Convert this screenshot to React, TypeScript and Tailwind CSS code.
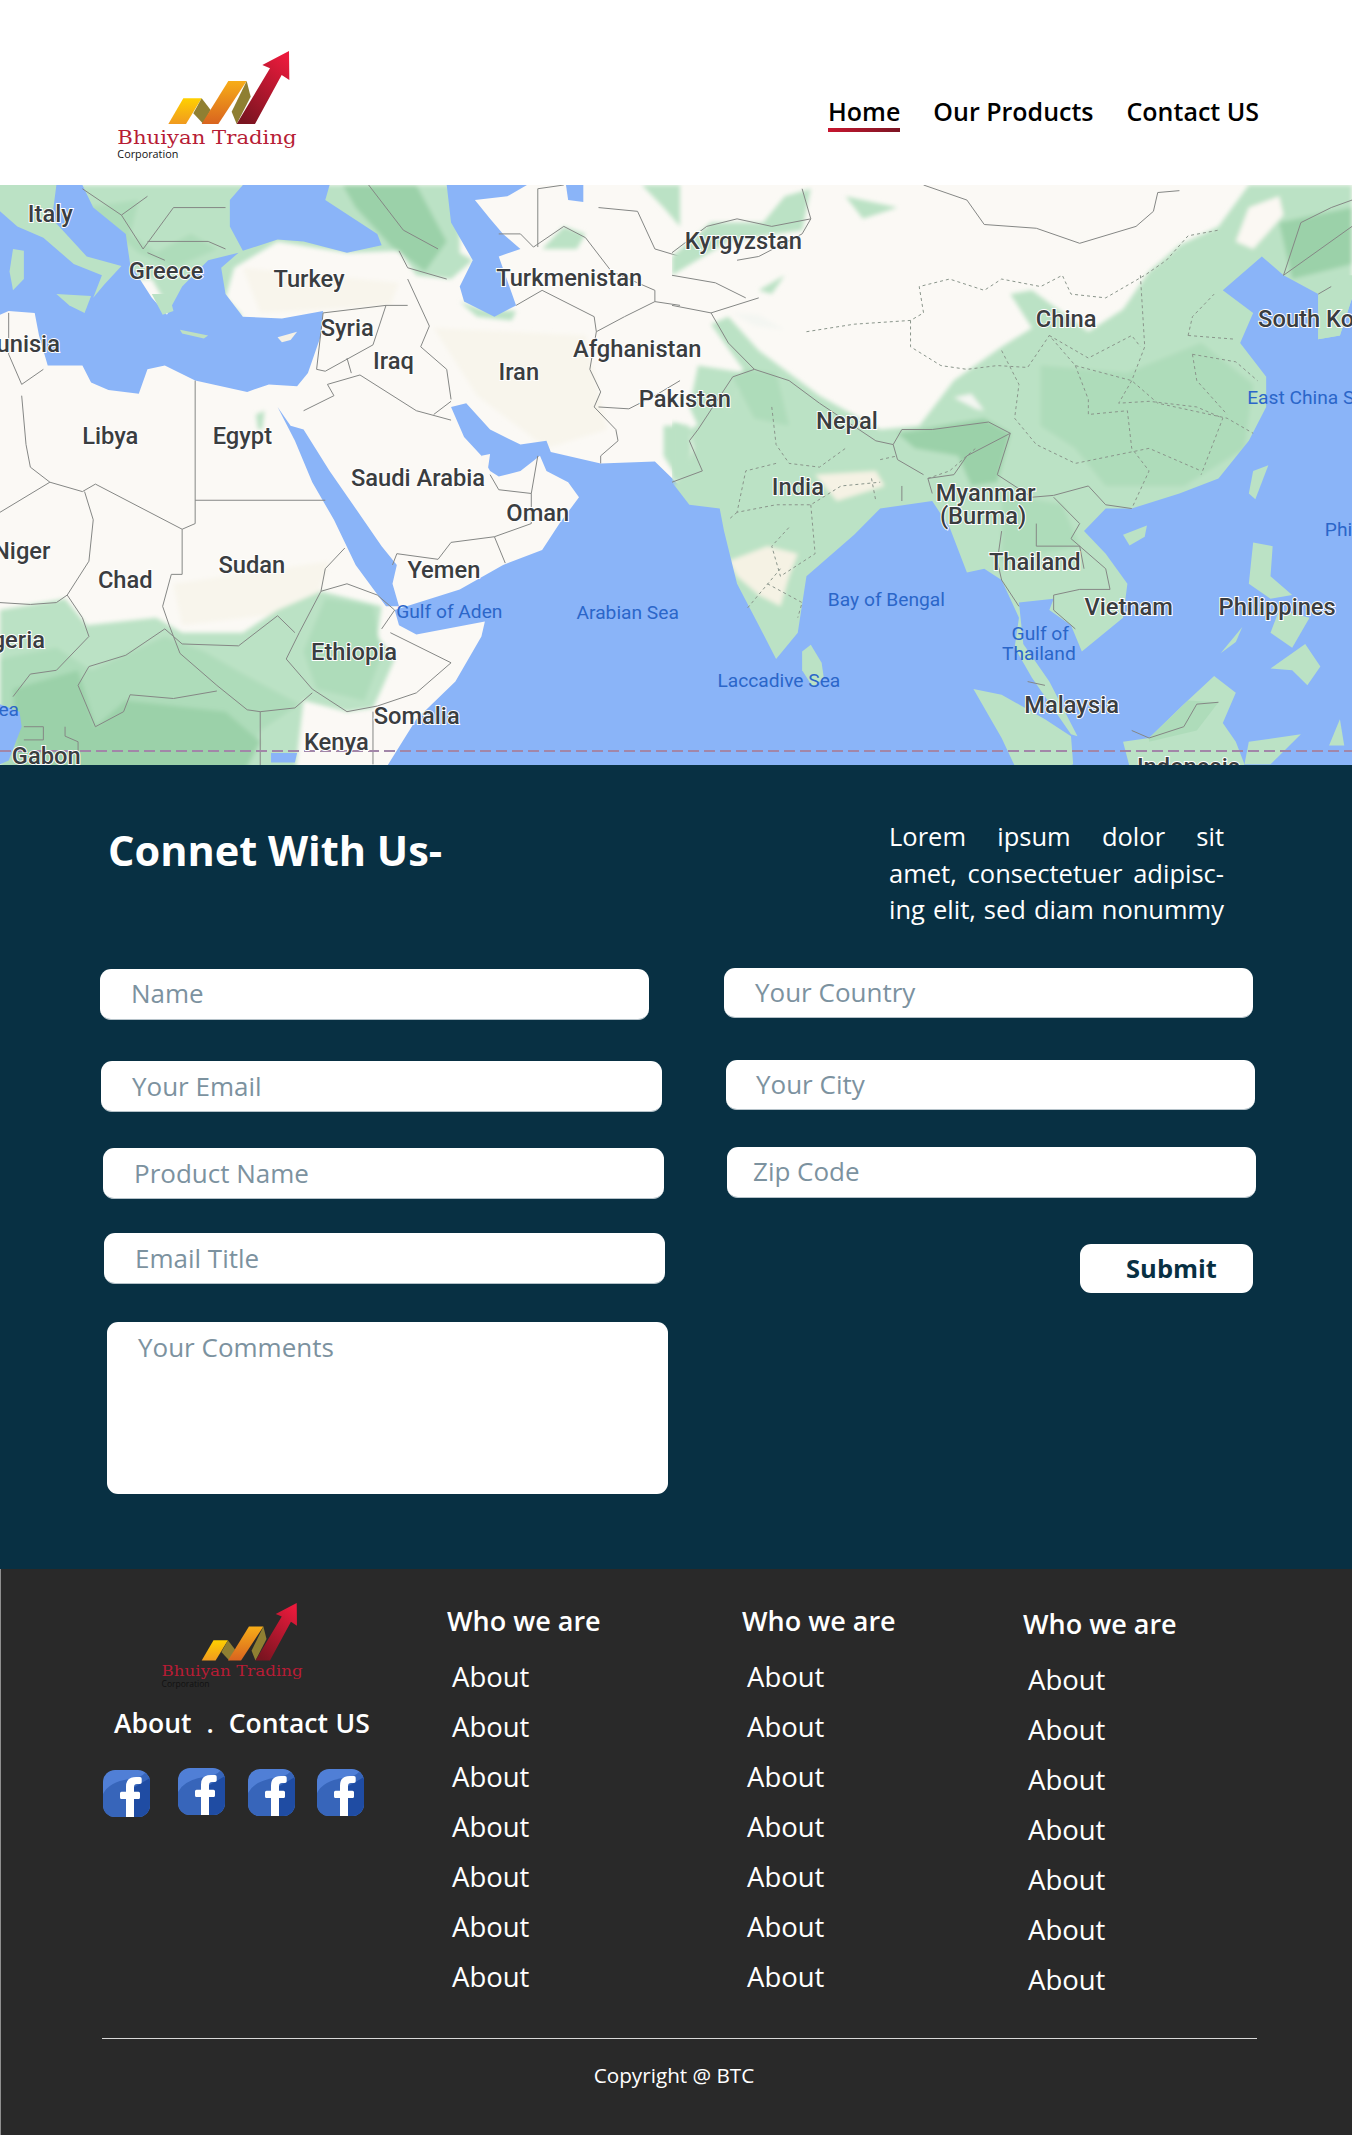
const SCALE_L = 'scale(0.4337,0.3762)';
const SCALE_R = 'translate(672,0) scale(0.4337,0.3762)';

const GREEN = '#bbe2c5';
const GREEN_MID = '#aedcba';
const GREEN_DARK = '#9bd1a9';
const WATER = '#8ab4f8';
const LINE = '#858785';

const leftGreens: [string, string][] = [
  ['#f8f5ec', 'M1000,380 L1350,400 L1400,650 L1260,700 L1100,560 Z'],
  ['#f8f5ec', 'M560,220 L920,260 L900,320 L600,340 Z'],
  ['#f8f5ec', 'M400,1060 L760,1000 L720,1130 L420,1170 Z'],
  [GREEN, 'M0,0 H1060 L1060,180 L1090,200 L1040,250 L960,240 L920,175 L800,180 L640,150 L540,220 L520,300 L560,350 L400,350 L350,250 L200,250 L0,200 Z'],
  [GREEN_MID, 'M200,60 L320,40 L300,130 L360,180 L440,130 L500,170 L400,220 L320,180 Z'],
  [GREEN_DARK, 'M790,0 H960 L1030,150 L980,230 L900,160 L820,60 Z'],
  [GREEN, 'M1060,310 L1110,330 L1190,335 L1180,360 L1100,350 Z'],
  [GREEN, 'M1480,0 H1568 V110 L1530,60 Z'],
  [GREEN, 'M1250,170 L1300,110 L1350,130 L1330,170 Z'],
  [GREEN, 'M1530,640 H1568 V790 L1530,720 Z'],
  [GREEN, 'M0,1130 L150,1100 L200,1170 L360,1150 L420,1190 L560,1190 L640,1130 L740,1080 L880,1120 L870,1200 L910,1260 L880,1340 L860,1390 L800,1400 L700,1370 L680,1568 H0 Z'],
  [GREEN_MID, 'M0,1260 L130,1230 L210,1290 L380,1200 L470,1240 L560,1300 L690,1380 L600,1450 L560,1568 H0 Z'],
  [GREEN_DARK, 'M30,1340 L180,1290 L220,1440 L290,1370 L520,1400 L600,1480 L560,1568 H40 Z'],
  [GREEN_MID, 'M700,1240 L750,1100 L860,1120 L880,1250 L840,1370 L730,1340 Z'],
  [GREEN, 'M590,610 L610,600 L605,650 L595,650 Z'],
];

const leftWater = [
  'M0,70 L40,0 L130,0 L190,0 L215,60 L290,130 L300,210 L350,300 L385,345 L420,270 L480,200 L550,180 L510,220 L520,290 L560,350 L650,355 L745,335 L740,400 L725,450 L710,500 L685,535 L620,530 L570,550 L450,520 L380,480 L340,490 L320,555 L250,545 L210,525 L190,480 L110,480 L90,400 L80,340 L20,335 L0,345 Z',
  'M530,110 L530,40 L560,0 L760,0 L750,40 L870,130 L880,160 L800,180 L700,150 L640,145 L560,175 Z',
  'M1030,0 H1215 L1170,30 L1095,40 L1130,90 L1160,130 L1200,170 L1150,190 L1190,320 L1140,350 L1070,310 L1060,270 L1090,200 L1040,100 Z',
  'M1305,0 H1345 V45 L1310,40 Z',
  'M1040,590 L1075,580 L1130,650 L1200,690 L1260,680 L1270,710 L1385,740 L1510,735 L1568,800 V1568 H880 L960,1420 L1050,1320 L1110,1200 L1118,1160 L960,1195 L920,1170 L910,1130 L1060,1075 L1160,1010 L1250,970 L1290,900 L1335,830 L1310,790 L1260,760 L1245,720 L1200,760 L1150,775 L1130,760 L1110,720 L1070,670 Z',
  'M640,590 L670,640 L700,650 L760,760 L820,860 L880,960 L915,1010 L905,1060 L920,1120 L890,1120 L820,1010 L770,890 L720,790 L680,680 Z',
  'M0,1380 L45,1400 L50,1440 L20,1530 L0,1540 Z',
  'M625,1510 H685 L680,1535 H625 Z',
];

const leftIslands: [string, string][] = [
  [GREEN, 'M0,0 L130,0 L120,90 L200,190 L280,215 L240,265 L215,300 L235,240 L170,210 L100,140 L40,110 L0,70 Z'],
  [GREEN, 'M30,170 L55,175 L55,250 L30,280 L22,230 Z'],
  [GREEN, 'M130,290 L210,295 L195,340 L160,320 Z'],
  [GREEN, 'M350,290 L390,290 L400,335 L375,345 Z'],
  ['#bfe0c0', 'M415,385 L480,400 L470,408 L420,395 Z'],
  ['#f5f1e6', 'M640,405 L685,390 L670,412 L650,418 Z'],
  ['#fbf8f3', 'M1110,720 L1130,715 L1125,755 L1110,745 Z'],
];

const leftBorders = [
  'M450,520 V900 L420,915 V1035 L395,1035 L375,1120 L390,1170 L415,1245 L500,1330 L570,1395 L600,1400 L600,1568',
  'M450,838 H750',
  'M420,915 L220,795 L190,815 L115,790 L0,870',
  'M50,560 L60,690 L70,750 L115,790',
  'M20,340 L20,450 L50,530 L100,490',
  'M195,815 L215,890 L205,1000 L155,1090',
  'M0,1110 L70,1115 L130,1110 L155,1090 L190,1150 L205,1200 L130,1290 L70,1300 L30,1360',
  'M205,1280 L290,1250 L380,1180 L420,1220 L550,1225 L640,1145 L680,1190',
  'M205,1280 L180,1330 L220,1440 L285,1400 L300,1355 L400,1365 L500,1345',
  'M795,965 L750,1020 L740,1080 L690,1190 L660,1260 L720,1340 L800,1400 L870,1385 L960,1350 L1040,1270 L900,1190',
  'M740,1080 L800,1060 L870,1090 L910,1130 L880,1180',
  'M860,1400 V1540',
  'M720,1350 L680,1390 L600,1400',
  'M55,1440 H100 V1475 H55 M150,1440 V1465 L180,1480 V1540',
  'M700,600 L770,560 L755,530 L830,505 L960,600 L1040,625',
  'M1000,610 L1040,575',
  'M745,340 L740,390 L730,490 L750,495 L860,425 L890,320 L940,320',
  'M940,250 L990,375 L970,430 L1030,490 L1040,570',
  'M800,460 L810,500',
  'M915,980 L1010,995 L1040,950 L1140,935 L1225,900 L1225,820 L1150,810 L1130,770',
  'M915,980 L905,1010',
  'M1140,935 L1165,1005',
  'M1225,820 L1240,720',
  'M745,340 L890,320',
  'M1190,320 L1250,280 L1370,350 L1375,390 L1360,490 L1385,550 L1370,590 L1420,650 L1425,680 L1385,720 L1385,740',
  'M1380,590 L1450,595 L1510,560 L1568,520',
  'M1240,10 V165',
  'M1240,10 L1300,0 M1380,60 L1470,70 L1510,170 L1568,190',
  'M1150,130 L1200,130 L1230,165 L1300,110 L1350,140 L1410,230 L1510,280 L1510,310 L1568,320',
  'M1375,390 L1440,350 L1510,310',
  'M190,10 L280,80 L330,170 L400,60 L520,60 M340,150 L480,150 L520,170 M280,80 L340,30 M340,180 L380,200 M850,0 L930,120 L1010,170 M920,175 L940,220 L1030,250',
];

const rightGreens: [string, string][] = [
  [GREEN, 'M0,800 L30,760 L50,700 L40,650 L120,600 L130,600 L170,500 L90,370 L130,350 L200,440 L340,560 L480,650 L570,640 L650,520 L760,430 L830,380 L780,290 L830,280 L960,390 L1040,330 L1100,230 L1170,160 L1260,110 L1330,0 H1568 V1568 H0 Z'],
  [GREEN, 'M0,630 L40,640 L45,700 L35,760 L0,790 Z'],
  [GREEN, 'M60,480 L170,500 L130,600 L60,640 L40,590 Z'],
  [GREEN_MID, 'M850,480 L1050,500 L1220,420 L1340,530 L1320,700 L1180,800 L1000,800 L930,700 L850,640 Z'],
  [GREEN_DARK, 'M1400,100 L1568,60 V210 L1430,250 Z'],
  [GREEN_DARK, 'M520,660 L720,620 L780,660 L750,790 L690,800 L660,720 L560,700 Z'],
  [GREEN_MID, 'M760,820 L900,850 L940,960 L760,1000 Z'],
  [GREEN_MID, 'M170,490 L240,500 L270,640 L190,620 L140,510 Z'],
  ['#fbf8f3', 'M1300,150 L1330,60 L1400,30 L1410,80 L1340,170 Z'],
  ['#f5f2e4', 'M130,1000 L220,960 L290,980 L270,1040 L250,1120 L200,1090 L150,1040 Z'],
  ['#f5f2e4', 'M330,770 L470,760 L490,800 L380,840 Z'],
  [GREEN, 'M260,30 L320,10 L300,120 L130,150 L0,240 L0,190 L90,100 L210,100 Z'],
  [GREEN, 'M400,30 L520,60 L440,90 Z'],
  [GREEN, 'M200,280 L260,240 L230,290 Z'],
];

const rightWater =
  'M0,790 L40,850 L110,860 L120,920 L150,1060 L200,1170 L240,1260 L290,1190 L310,1040 L420,930 L480,860 L600,840 L640,910 L680,1030 L720,1020 L760,1050 L800,1150 L790,1230 L830,1310 L920,1460 L935,1465 L870,1320 L810,1220 L800,1110 L880,1100 L870,1130 L920,1170 L945,1240 L1040,1150 L1050,1060 L1000,980 L950,920 L1000,860 L1060,860 L1170,820 L1260,780 L1330,680 L1370,590 L1370,510 L1310,420 L1340,340 L1270,280 L1360,190 L1410,240 L1490,290 L1490,410 L1540,400 L1568,300 V1568 H0 Z';

const rightIslands: [string, string][] = [
  [GREEN, 'M300,1240 L320,1222 L345,1270 L350,1310 L325,1335 L300,1290 Z'],
  [GREEN, 'M695,1340 L760,1355 L860,1420 L920,1465 L925,1540 L860,1568 H800 L760,1470 Z'],
  [GREEN, 'M1040,1480 L1100,1470 L1180,1380 L1250,1305 L1300,1350 L1270,1430 L1300,1480 L1320,1540 L1300,1568 H1060 Z'],
  [GREEN_MID, 'M1100,1470 L1190,1370 L1260,1375 L1210,1450 L1100,1480 Z'],
  [GREEN, 'M1340,950 L1385,960 L1380,1040 L1430,1090 L1380,1100 L1330,1060 Z'],
  [GREEN, 'M1330,820 L1340,760 L1375,745 L1345,835 Z'],
  [GREEN, 'M1040,930 L1095,905 L1090,935 L1055,958 Z'],
  [GREEN, 'M1380,1285 L1460,1220 L1495,1280 L1465,1330 L1430,1290 Z'],
  [GREEN, 'M1265,1245 L1315,1175 L1300,1215 Z'],
  [GREEN, 'M1400,1130 L1470,1150 L1430,1230 L1380,1190 Z'],
  [GREEN, 'M1330,1480 L1450,1460 L1380,1540 L1320,1540 Z'],
  [GREEN, 'M1490,290 L1540,240 L1568,240 V300 L1540,400 L1490,410 Z'],
  [GREEN, 'M1515,1490 L1540,1420 L1550,1490 Z'],
];

const rightBorders = [
  'M580,0 L680,40 L720,105 L840,115 L940,155 L1070,110 L1110,70 L1120,20 L1170,15',
  'M300,10 L320,90 L300,130 L200,190 L150,200',
  'M0,180 L80,110 L150,90 L230,110 L320,90',
  'M90,340 L130,420 L190,490 L140,510 L60,650 L40,680 L70,760 L0,790',
  'M190,490 L270,520 L340,580 L470,680 L510,690 L530,650 L600,650 L730,630 L780,660',
  'M780,660 L680,720 L650,770 L590,780 L600,820',
  'M510,690 L520,730 L580,770 M530,800 L530,840',
  'M780,660 L750,770 L830,830 L880,825 L960,800 L1000,850 L1060,860',
  'M880,830 L940,900 L920,940 L1000,1020 L1010,1075 L940,1075 L880,1090 L880,1130 L930,1180',
  'M840,900 L840,960 L940,960 L950,1020',
  'M760,920 L750,1000 L760,1050 L800,1120',
  'M820,1320 L860,1330',
  'M1060,1450 L1100,1470 L1180,1440 L1210,1380 L1260,1375',
  'M1490,290 L1520,270',
  'M1410,240 L1568,110',
  'M0,320 L90,340 L200,300 M0,240 L100,260 L170,300',
  'M1410,240 L1450,100 L1520,60 L1568,40',
];

const rightDashed = [
  'M310,390 L420,370 L550,360 L580,340 L570,270 L640,250 L720,280 L760,250 L850,270 L900,240 L920,290 L1000,300 L1090,240 L1140,200 L1190,135 L1260,120',
  'M550,360 L550,430 L620,480 L680,490 L750,480 L820,485 L870,400 L930,480 L1060,520 L1120,580 L1200,600 L1280,620 L1340,660',
  'M760,440 L800,530 L790,620 L840,690 L930,740 L1100,700 L1220,760',
  'M930,480 L960,570 L960,610 L1050,600 L1060,700 L1100,760 L1060,860',
  'M1080,240 L1090,430 L1060,520 L1030,580 L1100,575 L1210,590 L1270,620 L1220,770',
  'M1190,400 L1200,350 L1250,290 M1190,400 L1300,410 M1200,450 L1300,470 L1350,520 M1200,450 L1210,520 L1280,610',
  'M870,400 L960,460 L1060,400 L1080,430',
  'M230,590 L240,690 L270,740 L340,750 L400,700 M240,740 L170,760 L150,870 L240,850 L320,850 L390,800 L480,790 M320,850 L330,980 L250,1040 L230,960 L270,910 M150,870 L130,890 M220,1060 L300,1110 L290,1150 M460,780 L470,840 M250,1020 L170,1130',
  'M480,730 L520,720 M590,780 L640,760 L700,700',
];

const labels: { t: string; x: number; y: number; a?: 'start' | 'end'; blue?: boolean }[] = [
  { t: 'Italy', x: 37, y: 157 },
  { t: 'Greece', x: 122, y: 199 },
  { t: 'Turkey', x: 227, y: 205 },
  { t: 'Syria', x: 255, y: 241 },
  { t: 'Iraq', x: 289, y: 265 },
  { t: 'Iran', x: 381, y: 273 },
  { t: 'Turkmenistan', x: 418, y: 204 },
  { t: 'Kyrgyzstan', x: 546, y: 177 },
  { t: 'Afghanistan', x: 468, y: 256 },
  { t: 'Pakistan', x: 503, y: 293 },
  { t: 'Nepal', x: 622, y: 309 },
  { t: 'China', x: 783, y: 234 },
  { t: 'South Korea', x: 924, y: 234, a: 'start' },
  { t: 'East China Sea', x: 916, y: 292, a: 'start', blue: true },
  { t: 'Philippine Sea', x: 973, y: 389, a: 'start', blue: true },
  { t: 'Tunisia', x: 44, y: 253, a: 'end' },
  { t: 'Libya', x: 81, y: 320 },
  { t: 'Egypt', x: 178, y: 320 },
  { t: 'Saudi Arabia', x: 307, y: 351 },
  { t: 'Oman', x: 395, y: 377 },
  { t: 'Niger', x: 37, y: 405, a: 'end' },
  { t: 'Chad', x: 92, y: 426 },
  { t: 'Sudan', x: 185, y: 415 },
  { t: 'Yemen', x: 326, y: 419 },
  { t: 'Gulf of Aden', x: 330, y: 449, blue: true },
  { t: 'Arabian Sea', x: 461, y: 450, blue: true },
  { t: 'Bay of Bengal', x: 651, y: 440, blue: true },
  { t: 'Ethiopia', x: 260, y: 479 },
  { t: 'Somalia', x: 306, y: 526 },
  { t: 'Kenya', x: 247, y: 545 },
  { t: 'Gabon', x: 34, y: 555 },
  { t: 'Nigeria', x: 33, y: 470, a: 'end' },
  { t: 'Sea', x: 14, y: 521, a: 'end', blue: true },
  { t: 'Laccadive Sea', x: 572, y: 500, blue: true },
  { t: 'India', x: 586, y: 358 },
  { t: 'Myanmar', x: 724, y: 362 },
  { t: '(Burma)', x: 722, y: 379 },
  { t: 'Thailand', x: 760, y: 413 },
  { t: 'Vietnam', x: 829, y: 446 },
  { t: 'Philippines', x: 938, y: 446 },
  { t: 'Gulf of', x: 764, y: 465, blue: true },
  { t: 'Thailand', x: 763, y: 480, blue: true },
  { t: 'Malaysia', x: 787, y: 518 },
  { t: 'Indonesia', x: 873, y: 563 },
];

function MapPanel() {
  return (
    <svg viewBox="0 0 1352 580" className="block w-full h-[580px]">
      <defs>
        <filter id="soft" x="-5%" y="-5%" width="110%" height="110%">
          <feGaussianBlur stdDeviation="5" />
        </filter>
        <clipPath id="right-panel">
          <rect width="1568" height="1568" />
        </clipPath>
      </defs>
      <rect width="1352" height="580" fill="#fbf9f5" />
      <g transform={SCALE_L}>
        <g filter="url(#soft)">
          {leftGreens.map(([fill, d], i) => <path key={i} d={d} fill={fill} />)}
        </g>
        {leftWater.map((d, i) => <path key={i} d={d} fill={WATER} />)}
        {leftIslands.map(([fill, d], i) => <path key={i} d={d} fill={fill} />)}
        {leftBorders.map((d, i) => (
          <path key={i} d={d} fill="none" stroke={LINE} strokeWidth="1" vectorEffect="non-scaling-stroke" />
        ))}
      </g>
      <g transform={SCALE_R}>
        <g clipPath="url(#right-panel)">
          <g filter="url(#soft)">
            {rightGreens.map(([fill, d], i) => <path key={i} d={d} fill={fill} />)}
            <path d="M650,565 L690,555 L720,600 L700,595 Z M140,340 L200,345 L260,385 L190,375 Z" fill="#f4f6f2" />
          </g>
        </g>
        <path d={rightWater} fill={WATER} />
        {rightIslands.map(([fill, d], i) => <path key={i} d={d} fill={fill} />)}
        {rightDashed.map((d, i) => (
          <path key={i} d={d} fill="none" stroke="#8a958b" strokeWidth="1" strokeDasharray="3 3" vectorEffect="non-scaling-stroke" />
        ))}
        {rightBorders.map((d, i) => (
          <path key={i} d={d} fill="none" stroke={LINE} strokeWidth="1" vectorEffect="non-scaling-stroke" />
        ))}
      </g>
      <line x1="0" y1="566" x2="1352" y2="566" stroke="#a286a8" strokeWidth="2" strokeDasharray="11 5" />
      <g transform="scale(1.3616) translate(0,-135.9)" className="font-['Roboto',sans-serif]">
        {labels.map((l, i) =>
          l.blue ? (
            <text key={i} x={l.x} y={l.y} textAnchor={l.a ?? 'middle'} dominantBaseline="central" fontSize="14.1" fill="#2b66c9">
              {l.t}
            </text>
          ) : (
            <text
              key={i}
              x={l.x}
              y={l.y}
              textAnchor={l.a ?? 'middle'}
              dominantBaseline="central"
              fontSize="17.4"
              fontWeight="500"
              fill="#3a3d40"
              stroke="#ffffff"
              strokeWidth="1.4"
              className="[paint-order:stroke]"
            >
              {l.t}
            </text>
          ),
        )}
      </g>
    </svg>
  );
}

function Logo({ className }: { className: string }) {
  return (
    <svg viewBox="0 0 720 420" className={className}>
      <defs>
        <linearGradient id="lg-y" x1="0" y1="0" x2="0" y2="1">
          <stop offset="0" stopColor="#ffd000" />
          <stop offset="1" stopColor="#f09a1f" />
        </linearGradient>
        <linearGradient id="lg-o" x1="0" y1="0" x2="0" y2="1">
          <stop offset="0" stopColor="#f7ad18" />
          <stop offset="1" stopColor="#d9641f" />
        </linearGradient>
        <linearGradient id="lg-r" x1="0.8" y1="0" x2="0.2" y2="1">
          <stop offset="0" stopColor="#ea1a3c" />
          <stop offset="1" stopColor="#7a1420" />
        </linearGradient>
      </defs>
      <path d="M235,282 L280,205 L335,205 L288,282 Z" fill="url(#lg-y)" />
      <path d="M335,205 L362,240 L340,282 L310,250 Z" fill="#8f7f32" />
      <path d="M335,282 L415,153 L470,153 L385,282 Z" fill="url(#lg-o)" />
      <path d="M470,153 L482,200 L440,282 L425,245 Z" fill="#8f7f32" />
      <path d="M440,282 L540,115 L517,105 L597,63 L598,150 L575,135 L495,282 Z" fill="url(#lg-r)" />
      <text x="82" y="343" fontSize="58" fontFamily="'DejaVu Serif', serif" fill="#b71c35" textLength="538" lengthAdjust="spacingAndGlyphs">
        Bhuiyan Trading
      </text>
      <text x="82" y="384" fontSize="34" fontFamily="'Open Sans', sans-serif" fontWeight="500" fill="#111111" textLength="183" lengthAdjust="spacingAndGlyphs">
        Corporation
      </text>
    </svg>
  );
}

function FacebookIcon({ className }: { className: string }) {
  return (
    <svg viewBox="0 0 47 47" className={className}>
      <defs>
        <clipPath id="fb-clip">
          <rect width="47" height="47" rx="12" />
        </clipPath>
      </defs>
      <g clipPath="url(#fb-clip)">
        <rect width="47" height="47" fill="#507fd6" />
        <path d="M0,24 Q6,12 26,9 Q38,8 42,3 L47,6 V47 H0 Z" fill="#3765ba" />
        <path d="M30,47 V18 L47,8 V47 Z" fill="#1f4ca3" />
        <path
          d="M23,47 V29 H18.5 Q17,29 17,27.5 V23.2 Q17,21.7 18.5,21.7 H23 V16.5 Q23,7 33,7 H37 Q38.7,7 38.7,8.7 V12.3 Q38.7,14 37,14 H34 Q31,14 31,17 V21.7 H35.5 Q37,21.7 37,23.2 V27.5 Q37,29 35.5,29 H31 V47 Z"
          fill="#ffffff"
        />
      </g>
    </svg>
  );
}

const leftFields = [
  { label: 'Name', box: 'mt-px ml-[100px] w-[549px] h-[51px] pb-[2px]' },
  { label: 'Your Email', box: 'mt-[41px] ml-[101px] w-[561px] h-[51px] pt-px' },
  { label: 'Product Name', box: 'mt-[36px] ml-[103px] w-[561px] h-[51px] pt-px' },
  { label: 'Email Title', box: 'mt-[34px] ml-[104px] w-[561px] h-[51px] pt-px' },
];

const rightFields = [
  { label: 'Your Country', box: 'w-[529px] h-[50px] pl-[31px]' },
  { label: 'Your City', box: 'mt-[42px] ml-[2px] w-[529px] h-[50px] pl-[30px]' },
  { label: 'Zip Code', box: 'mt-[37px] ml-[3px] w-[529px] h-[51px] pl-[26px] pb-[2px]' },
];

const fieldBase =
  'flex items-center bg-white rounded-[11px] border-b border-[#b5c2c9] text-[26px] text-[#7c929f]';

function ContactSection() {
  return (
    <section className="h-[804px] bg-[#083043] pt-[48px]">
      <div className="flex h-[155px]">
        <h2 className="ml-[108px] w-[781px] pt-[11px] text-[41.5px] leading-[52px] font-bold text-white">Connet With Us-</h2>
        <p className="w-[335px] pt-[5px] text-[25.5px] leading-[36.5px] text-white whitespace-nowrap [text-align-last:justify]">
          <span className="block">Lorem ipsum dolor sit</span>
          <span className="block">amet, consectetuer adipisc-</span>
          <span className="block">ing elit, sed diam nonummy</span>
        </p>
      </div>
      <div className="flex">
        <div className="w-[724px] shrink-0">
          {leftFields.map(f => (
            <div key={f.label} className={`${fieldBase} pl-[31px] ${f.box}`}>{f.label}</div>
          ))}
          <div className="mt-[38px] ml-[107px] w-[561px] h-[172px] pl-[31px] pt-[7px] bg-white rounded-[11px] text-[26px] leading-[36px] text-[#7c929f]">
            Your Comments
          </div>
        </div>
        <div className="flex-1">
          {rightFields.map(f => (
            <div key={f.label} className={`${fieldBase} ${f.box}`}>{f.label}</div>
          ))}
          <button className="block mt-[46px] ml-[356px] w-[173px] h-[49px] pl-[10px] bg-white rounded-[11px] text-[25.5px] font-bold text-[#083043]">
            Submit
          </button>
        </div>
      </div>
    </section>
  );
}

const ABOUT_ITEMS = [1, 2, 3, 4, 5, 6, 7];

function FooterColumn({ className }: { className: string }) {
  return (
    <div className={className}>
      <h3 className="text-[27px] leading-[34px] font-semibold text-white">Who we are</h3>
      <ul className="mt-[14px] ml-[5px]">
        {ABOUT_ITEMS.map(n => (
          <li key={n} className="text-[27.5px] leading-[50px] text-white">About</li>
        ))}
      </ul>
    </div>
  );
}

function Footer() {
  return (
    <footer className="h-[566px] bg-[#292929] border-l border-[#8f8f8f]">
      <div className="flex h-[469px]">
        <div className="w-[446px] shrink-0">
          <Logo className="block ml-[139px] mt-[17px] w-[189px] h-[111px]" />
          <p className="ml-[113px] mt-[9px] text-[26.5px] leading-[34px] font-semibold text-white whitespace-pre [word-spacing:0.6px]">About  .  Contact US</p>
          <div className="flex items-start mt-[28px] ml-[102px]">
            <FacebookIcon className="mt-[2px] w-[47px] h-[47px]" />
            <FacebookIcon className="ml-[28px] w-[47px] h-[47px]" />
            <FacebookIcon className="mt-px ml-[23px] w-[47px] h-[47px]" />
            <FacebookIcon className="mt-px ml-[22px] w-[47px] h-[47px]" />
          </div>
        </div>
        <FooterColumn className="w-[295px] pt-[35px]" />
        <FooterColumn className="w-[281px] pt-[35px]" />
        <FooterColumn className="pt-[38px]" />
      </div>
      <div className="ml-[101px] w-[1155px] h-px bg-[#d8d8d8]" />
      <p className="mt-[21px] ml-[-5px] text-center text-[20.7px] leading-[30px] text-white">Copyright @ BTC</p>
    </footer>
  );
}

export default function App() {
  return (
    <div className="w-[1352px] font-['Open_Sans',sans-serif]">
      <header className="flex justify-between h-[185px] bg-white">
        <Logo className="block ml-[90px] mt-[30px] w-[240px] h-[140px]" />
        <nav className="flex mr-[93px] pt-[93px] gap-[33px] text-[25px] leading-[36px] font-semibold text-black">
          <a className="block">
            Home
            <span className="block mt-[-1px] h-[4px] bg-linear-to-r from-[#c8152f] to-[#7c1423]" />
          </a>
          <a>Our Products</a>
          <a>Contact US</a>
        </nav>
      </header>
      <MapPanel />
      <ContactSection />
      <Footer />
    </div>
  );
}
